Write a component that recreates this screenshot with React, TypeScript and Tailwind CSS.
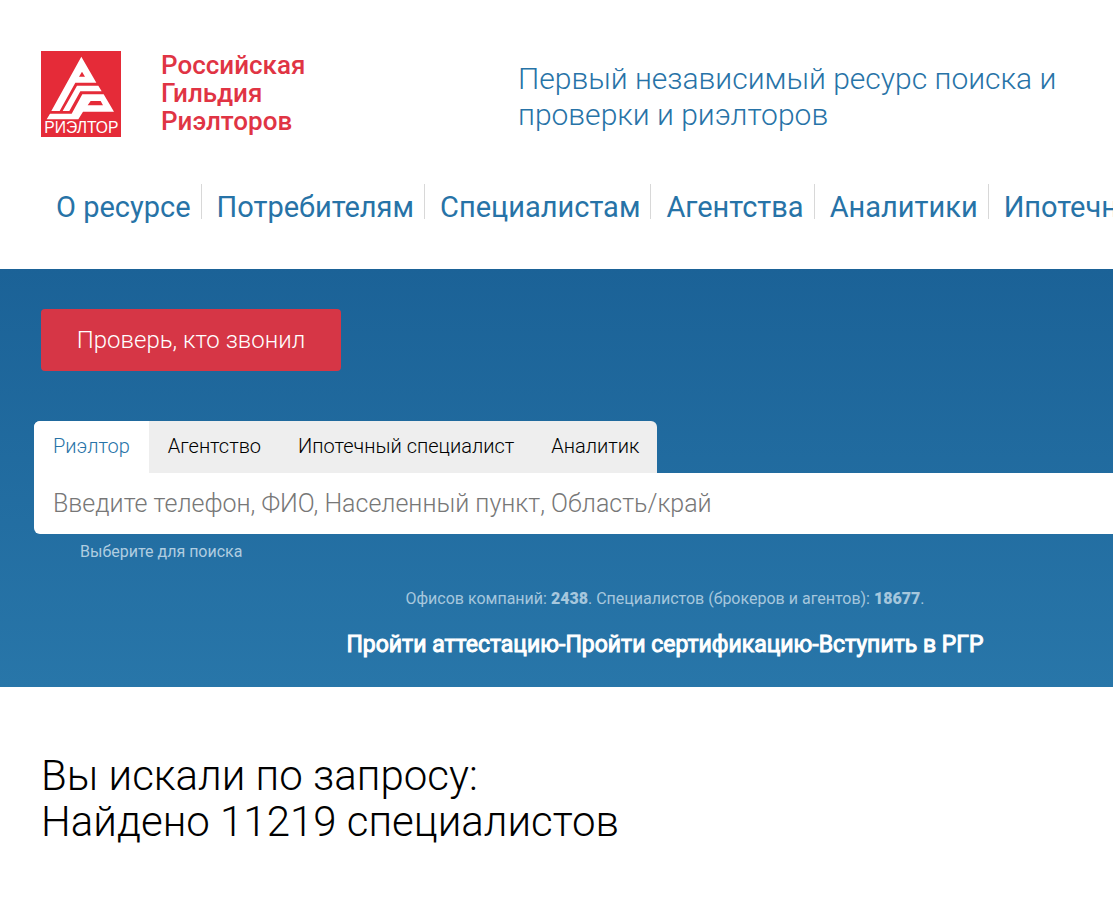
const navItems = ['О ресурсе', 'Потребителям', 'Специалистам', 'Агентства', 'Аналитики', 'Ипотечные брокеры'];
const tabs = ['Риэлтор', 'Агентство', 'Ипотечный специалист', 'Аналитик'];

function Logo() {
  return (
    <svg viewBox="0 0 240 258" className="block h-[86px] w-20" role="img" aria-label="Риэлтор">
      <rect width="240" height="258" fill="#e52b38" />
      <path
        fill="#fff"
        fillRule="evenodd"
        d="M121 17 L166 95 H103 L56 180 H31 Z M123 62 L114 77 H132 Z"
      />
      <path fill="#fff" d="M108 104 H172 L182 121 H118 L85 180 H65 Z" />
      <path
        fill="#fff"
        fillRule="evenodd"
        d="M124 130 H188 L219 182 H126 L112 205 H17 L27 188 H92 Z M149 150 L140 163 H186 L179 150 Z"
      />
      <text x="121" y="246" textAnchor="middle" fill="#fff" fontFamily="Liberation Sans, sans-serif" fontSize="47">
        РИЭЛТОР
      </text>
    </svg>
  );
}

export default function App() {
  return (
    <div className="overflow-x-hidden bg-white font-[Roboto,sans-serif] font-light text-black">
      <div className="min-w-[1330px]">
        <header className="px-[41px] pt-[51px]">
          <div className="flex items-start">
            <a href="#" className="flex gap-10">
              <Logo />
              <span className="w-[356px] text-[26px] leading-7 font-medium text-[#e03444]">
                Российская
                <br />
                Гильдия
                <br />
                Риэлторов
              </span>
            </a>
            <p className="w-[560px] pt-[10px] pl-px text-[30px] leading-9 text-[#2773a7]">
              Первый независимый ресурс поиска и проверки и риэлторов
            </p>
          </div>
          <nav className="mt-[47px] flex pb-[50px] text-[29px] leading-6 font-normal whitespace-nowrap text-[#2773a7]">
            {navItems.map((item) => (
              <a key={item} href="#" className="border-r border-[#d8d8d8] pt-[11px] pr-[10px] pl-[15px]">
                {item}
              </a>
            ))}
          </nav>
        </header>

        <section className="bg-linear-to-b from-[#1b6297] to-[#2876a9] px-[34px] pt-10 pb-7">
          <button type="button" className="ml-[7px] block h-[62px] w-[300px] rounded bg-[#d63646] text-2xl font-light text-white">
            Проверь, кто звонил
          </button>
          <form className="mt-[50px]">
            <div className="flex">
              <div role="tablist" className="flex overflow-hidden rounded-t-md bg-[#eee]">
                {tabs.map((tab, index) => (
                  <button
                    key={tab}
                    type="button"
                    role="tab"
                    aria-selected={index === 0}
                    className={
                      index === 0
                        ? 'h-[52px] bg-white px-[19px] pb-0.5 text-xl font-light text-[#2773a7]'
                        : 'h-[52px] pr-[18px] pl-[19px] pb-0.5 text-xl font-light text-black'
                    }
                  >
                    {tab}
                  </button>
                ))}
              </div>
            </div>
            <input
              type="text"
              aria-label="Поиск специалиста"
              placeholder="Введите телефон, ФИО, Населенный пункт, Область/край"
              className="block h-[61px] w-full rounded-b-md bg-white px-[19px] text-[25px] font-light outline-none placeholder:text-[#777]"
            />
          </form>
          <p className="mt-2 ml-[46px] text-base leading-5 font-normal text-[#b0cde0]">Выберите для поиска</p>
          <p className="mt-[27px] text-center text-base leading-5 font-normal text-[#a6c7dd]">
            Офисов компаний: <b className="font-black">2438</b>. Специалистов (брокеров и агентов): <b className="font-black">18677</b>.
          </p>
          <p className="mt-[22px] text-center text-[23px] leading-7 font-normal text-white [-webkit-text-stroke:1px_white]">
            <a href="#">Пройти аттестацию</a>-<a href="#">Пройти сертификацию</a>-<a href="#">Вступить в РГР</a>
          </p>
        </section>

        <main className="px-[41px] pt-[66px] pb-[52px]">
          <h1 className="text-[42px] leading-[46px]">
            Вы искали по запросу:
            <br />
            Найдено 11219 специалистов
          </h1>
        </main>
      </div>
    </div>
  );
}
